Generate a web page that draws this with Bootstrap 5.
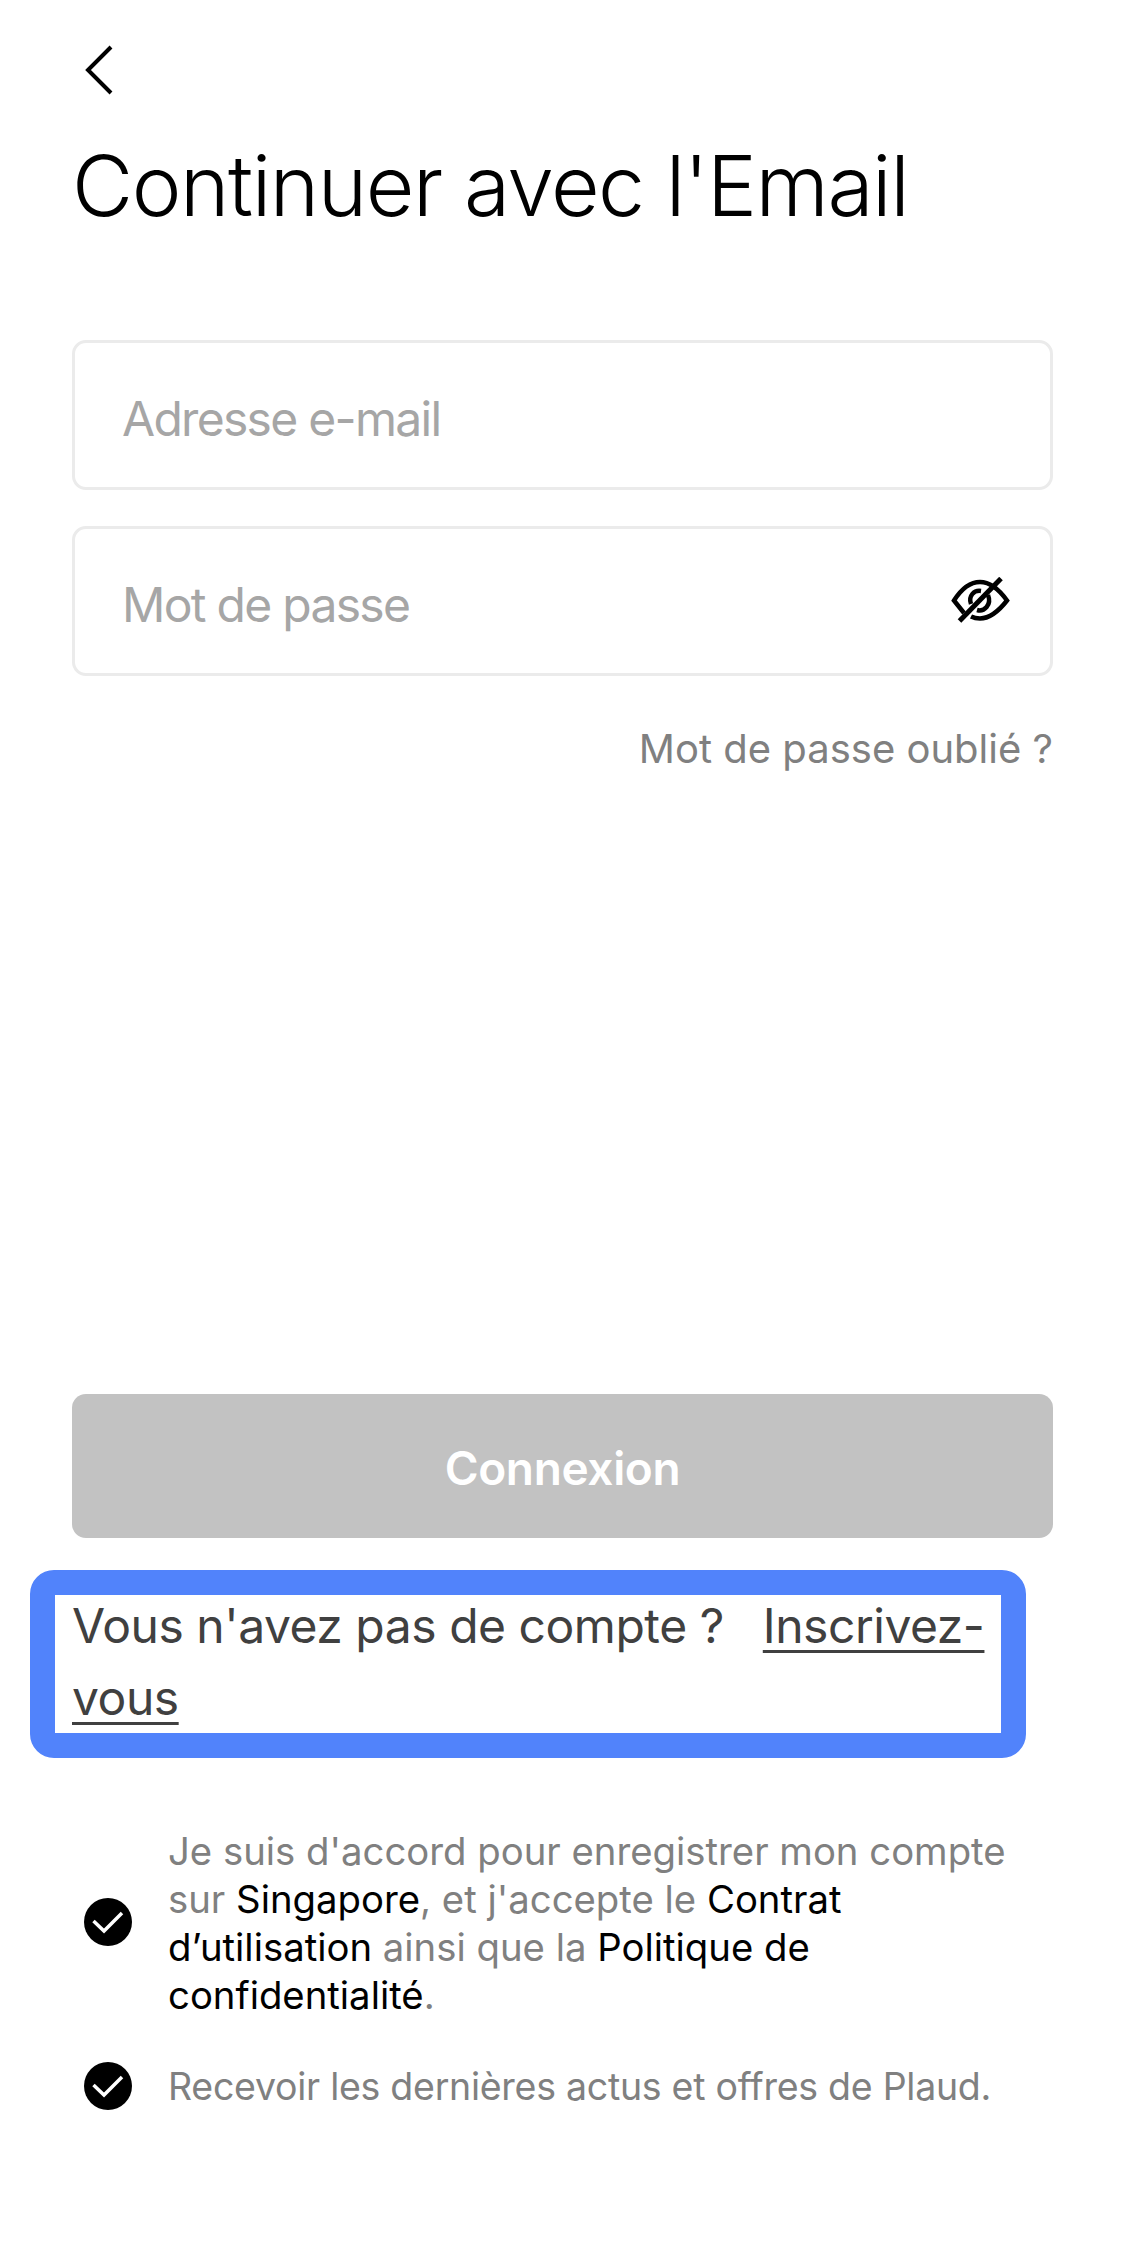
<!DOCTYPE html>
<html lang="fr">
<head>
<meta charset="utf-8">
<title>Continuer avec l'Email</title>
<link href="https://cdn.jsdelivr.net/npm/bootstrap@5.3.0/dist/css/bootstrap.min.css" rel="stylesheet">
<style>
body { font-family: Inter, "Liberation Sans", sans-serif; background: #fff; color: #000; height: 2241px; overflow: hidden; }
.screen { height: 2241px; }
.pad-x { padding-left: 72px; padding-right: 70px; }
.back-link { display: block; width: 40px; height: 64px; margin-left: 82px; padding-top: 40px; box-sizing: content-box; line-height: 0; }
.title-text { font-size: 84px; font-weight: 300; line-height: 88px; margin: 38px 0 0; letter-spacing: -1.45px; }
.field-box { height: 150px; border: 3px solid #ebebeb; border-radius: 14px; padding: 0 40px 0 47px; }
.field-box + .field-box { margin-top: 36px; }
.field-first { margin-top: 110px; }
.field-input { border: 0; outline: 0; padding: 8px 0 0; flex: 1; min-width: 0; font-size: 48px; letter-spacing: -1.7px; font-weight: 400; color: #000; background: transparent; font-family: inherit; height: 68px; }
.field-input::placeholder { color: #a6a6a6; opacity: 1; }
.forgot-row { margin-top: 49px; }
.forgot-text { font-size: 40px; line-height: 48px; color: #808080; text-decoration: none; }
.submit-wrap { margin-top: 621px; }
.submit-btn { display: block; width: 100%; height: 144px; background: #c2c2c2; border: 0; border-radius: 14px; color: #fff; font-size: 46px; letter-spacing: -0.35px; font-weight: 600; padding: 5px 0 0; }
.signup-mark { width: 996px; margin: 32px 0 0 30px; border: 25px solid #5183fb; border-radius: 24px; padding: 0 4px 0 17px; font-size: 48px; letter-spacing: -0.47px; line-height: 72px; color: #404040; height: 188px; overflow: hidden; font-weight: 400; background: #fff; }
.signup-lines { margin-top: -5px; }
.signup-lines a { color: #404040; text-decoration: underline; text-underline-offset: 7px; text-decoration-thickness: 3px; margin-left: 26px; }
.agree-row { padding-left: 84px; padding-right: 105px; gap: 36px; }
.agree-first { margin-top: 67px; }
.agree-second { margin-top: 42px; }
.agree-text { font-size: 38.3px; line-height: 48px; color: #808080; margin: 0; flex: 1; padding-top: 2px; }
.agree-second .agree-text { font-size: 37.5px; letter-spacing: -0.27px; }
.agree-text b { font-weight: 400; color: #000; }
.check-icon { flex: 0 0 48px; width: 48px; height: 48px; }
</style>
</head>
<body>
<main class="screen d-flex flex-column">
  <a class="back-link" href="#" aria-label="Retour">
    <svg width="40" height="64" viewBox="0 0 40 64" fill="none" stroke="#000" stroke-width="4"><path d="M29 7 L6 30 L29 53"/></svg>
  </a>
  <div class="pad-x">
    <h1 class="title-text">Continuer avec l'Email</h1>
    <form>
      <div class="field-box d-flex align-items-center field-first">
        <input class="field-input" type="email" placeholder="Adresse e-mail">
      </div>
      <div class="field-box d-flex align-items-center">
        <input class="field-input" type="password" placeholder="Mot de passe">
        <svg width="60" height="48" viewBox="0 0 60 48" fill="none" stroke="#000" stroke-width="4.5">
          <path d="M14 36 L4 23.500 C12 11 20 5 30 5 C40 5 48 11 57 23.500 C48 35 40 41.500 30 41.500 C27 41.500 24 41 21 39.500"/>
          <path d="M21 27 C18 19 24 13 31 14"/>
          <path d="M38 18 C42 28 34 35 27 33"/>
          <path d="M9.500 44 L51 1.500" stroke-width="5"/>
        </svg>
      </div>
      <div class="text-end forgot-row"><a class="forgot-text" href="#">Mot de passe oublié ?</a></div>
    </form>
  </div>
  <div class="pad-x submit-wrap"><button class="submit-btn" type="button">Connexion</button></div>
  <div class="signup-mark"><div class="signup-lines">Vous n'avez pas de compte ? <a href="#">Inscrivez-vous</a></div></div>
  <div class="d-flex align-items-center agree-row agree-first">
    <svg class="check-icon" viewBox="0 0 48 48"><circle cx="24" cy="24" r="24" fill="#000"/><path d="M9.500 23 L20 33 L38 15" fill="none" stroke="#fff" stroke-width="3.500"/></svg>
    <p class="agree-text">Je suis d'accord pour enregistrer mon compte sur <b>Singapore</b>, et j'accepte le <b>Contrat d’utilisation</b> ainsi que la <b>Politique de confidentialité</b>.</p>
  </div>
  <div class="d-flex align-items-center agree-row agree-second">
    <svg class="check-icon" viewBox="0 0 48 48"><circle cx="24" cy="24" r="24" fill="#000"/><path d="M9.500 23 L20 33 L38 15" fill="none" stroke="#fff" stroke-width="3.500"/></svg>
    <p class="agree-text">Recevoir les dernières actus et offres de Plaud.</p>
  </div>
</main>
<script src="https://cdn.jsdelivr.net/npm/bootstrap@5.3.0/dist/js/bootstrap.bundle.min.js"></script>
</body>
</html>
